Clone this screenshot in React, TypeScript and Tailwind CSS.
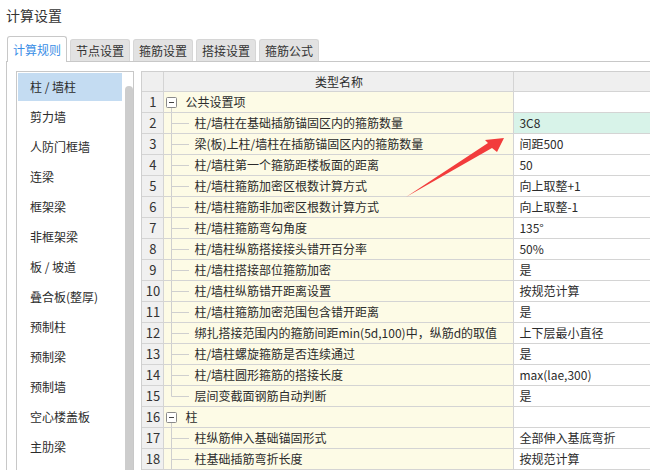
import React from 'react';

type Row = { n: number; name: string; v: string; group?: boolean; last?: boolean; hl?: boolean };

const rows: Row[] = [
  { n: 1, name: '公共设置项', v: '', group: true },
  { n: 2, name: '柱/墙柱在基础插筋锚固区内的箍筋数量', v: '3C8', hl: true },
  { n: 3, name: '梁(板)上柱/墙柱在插筋锚固区内的箍筋数量', v: '间距500' },
  { n: 4, name: '柱/墙柱第一个箍筋距楼板面的距离', v: '50' },
  { n: 5, name: '柱/墙柱箍筋加密区根数计算方式', v: '向上取整+1' },
  { n: 6, name: '柱/墙柱箍筋非加密区根数计算方式', v: '向上取整-1' },
  { n: 7, name: '柱/墙柱箍筋弯勾角度', v: '135°' },
  { n: 8, name: '柱/墙柱纵筋搭接接头错开百分率', v: '50%' },
  { n: 9, name: '柱/墙柱搭接部位箍筋加密', v: '是' },
  { n: 10, name: '柱/墙柱纵筋错开距离设置', v: '按规范计算' },
  { n: 11, name: '柱/墙柱箍筋加密范围包含错开距离', v: '是' },
  { n: 12, name: '绑扎搭接范围内的箍筋间距min(5d,100)中，纵筋d的取值', v: '上下层最小直径' },
  { n: 13, name: '柱/墙柱螺旋箍筋是否连续通过', v: '是' },
  { n: 14, name: '柱/墙柱圆形箍筋的搭接长度', v: 'max(lae,300)' },
  { n: 15, name: '层间变截面钢筋自动判断', v: '是', last: true },
  { n: 16, name: '柱', v: '', group: true },
  { n: 17, name: '柱纵筋伸入基础锚固形式', v: '全部伸入基底弯折' },
  { n: 18, name: '柱基础插筋弯折长度', v: '按规范计算' },
];

const items = [
  '柱 / 墙柱', '剪力墙', '人防门框墙', '连梁', '框架梁', '非框架梁', '板 / 坡道',
  '叠合板(整厚)', '预制柱', '预制梁', '预制墙', '空心楼盖板', '主肋梁',
];

const tabs = ['计算规则', '节点设置', '箍筋设置', '搭接设置', '箍筋公式'];

function GroupIcon() {
  return (
    <svg width="21" height="20" className="shrink-0">
      <rect x="2.5" y="5.5" width="10" height="10" rx="1" fill="#fff" stroke="#8a8a8a" />
      <line x1="5" y1="10.5" x2="10" y2="10.5" stroke="#444" />
      <line x1="7.5" y1="16" x2="7.5" y2="20" stroke="#cfcfcf" />
    </svg>
  );
}

function ChildLine({ last }: { last?: boolean }) {
  return (
    <svg width="30" height="20" className="shrink-0">
      <line x1="7.5" y1="0" x2="7.5" y2={last ? 10.5 : 20} stroke="#cfcfcf" />
      <line x1="7.5" y1="10.5" x2="25" y2="10.5" stroke="#cfcfcf" />
    </svg>
  );
}

export default function App() {
  return (
    <div
      className="relative w-[650px] h-[470px] overflow-hidden bg-white text-[#2b2b2b]"
      style={{ fontFamily: '"Noto Sans CJK SC", "Noto Sans", sans-serif' }}
    >
      <div className="h-[36px] pl-[6px] pt-[5px] text-[14px] leading-[20px] text-[#333]">计算设置</div>

      <div className="ml-[6px]">
        <div className="flex items-end gap-[3px] pl-px h-[25px]">
          {tabs.map((t, i) =>
            i === 0 ? (
              <div
                key={t}
                className="relative z-10 -mb-px h-[26px] w-[60px] flex items-center justify-center rounded-t-[3px] border border-b-0 border-[#c8c8c8] bg-white text-[12px] text-[#3a8ee6]"
              >
                {t}
              </div>
            ) : (
              <div
                key={t}
                className="h-[22px] w-[60px] flex items-center justify-center rounded-t-[3px] border border-b-0 border-[#d6d6d6] bg-[#e2e2e2] text-[12px] text-[#333]"
              >
                {t}
              </div>
            )
          )}
        </div>

        <div className="flex items-start border-l border-t border-[#c8c8c8] pl-[9px] pt-[9px] h-[420px]">
          <div className="flex w-[121px] h-[410px] border border-[#c8c8c8]">
            <div className="ml-px mt-px w-[104px] flex flex-col gap-[2px]">
              {items.map((it, i) => (
                <div
                  key={it}
                  className={`h-[28px] pl-[12px] leading-[28px] text-[12px] ${i === 0 ? 'bg-[#c4dcf2]' : ''}`}
                >
                  {it}
                </div>
              ))}
            </div>
            <div className="ml-[3px] mt-[14px] w-[8px] bg-[#cdcdcd] rounded-t-full" />
          </div>

          <div className="ml-[7px] w-[520px] border-l border-t border-[#cfcfcf] text-[12px]">
            <div className="flex h-[20px] border-b border-[#d4d4d4] bg-[#efefef]">
              <div className="w-[22px] border-r border-[#d4d4d4]" />
              <div className="w-[350px] border-r border-[#d4d4d4] text-center leading-[20px]">类型名称</div>
              <div className="flex-1" />
            </div>
            {rows.map((r) => (
              <div key={r.n} className="flex h-[21px] border-b border-[#d4d4d4]">
                <div className="w-[22px] shrink-0 border-r border-[#d4d4d4] bg-[#f0f0f0] text-center text-[13px] leading-[20px] text-[#333]">
                  {r.n}
                </div>
                <div className="w-[350px] shrink-0 flex items-center border-r border-[#d4d4d4] bg-[#fdfbe6] whitespace-nowrap overflow-hidden">
                  {r.group ? <GroupIcon /> : <ChildLine last={r.last} />}
                  <span className="leading-[20px]">{r.name}</span>
                </div>
                <div className={`flex-1 pl-[5px] leading-[20px] whitespace-nowrap ${r.hl ? 'bg-[#d8f3e9]' : 'bg-white'}`}>
                  {r.v}
                </div>
              </div>
            ))}
          </div>
        </div>
      </div>

      <svg className="absolute left-0 top-0 pointer-events-none" width="650" height="470">
        <polygon
          points="406,197 488,143 485,140 504,138 497,152 492,148"
          fill="#f23c3c"
        />
      </svg>
    </div>
  );
}
